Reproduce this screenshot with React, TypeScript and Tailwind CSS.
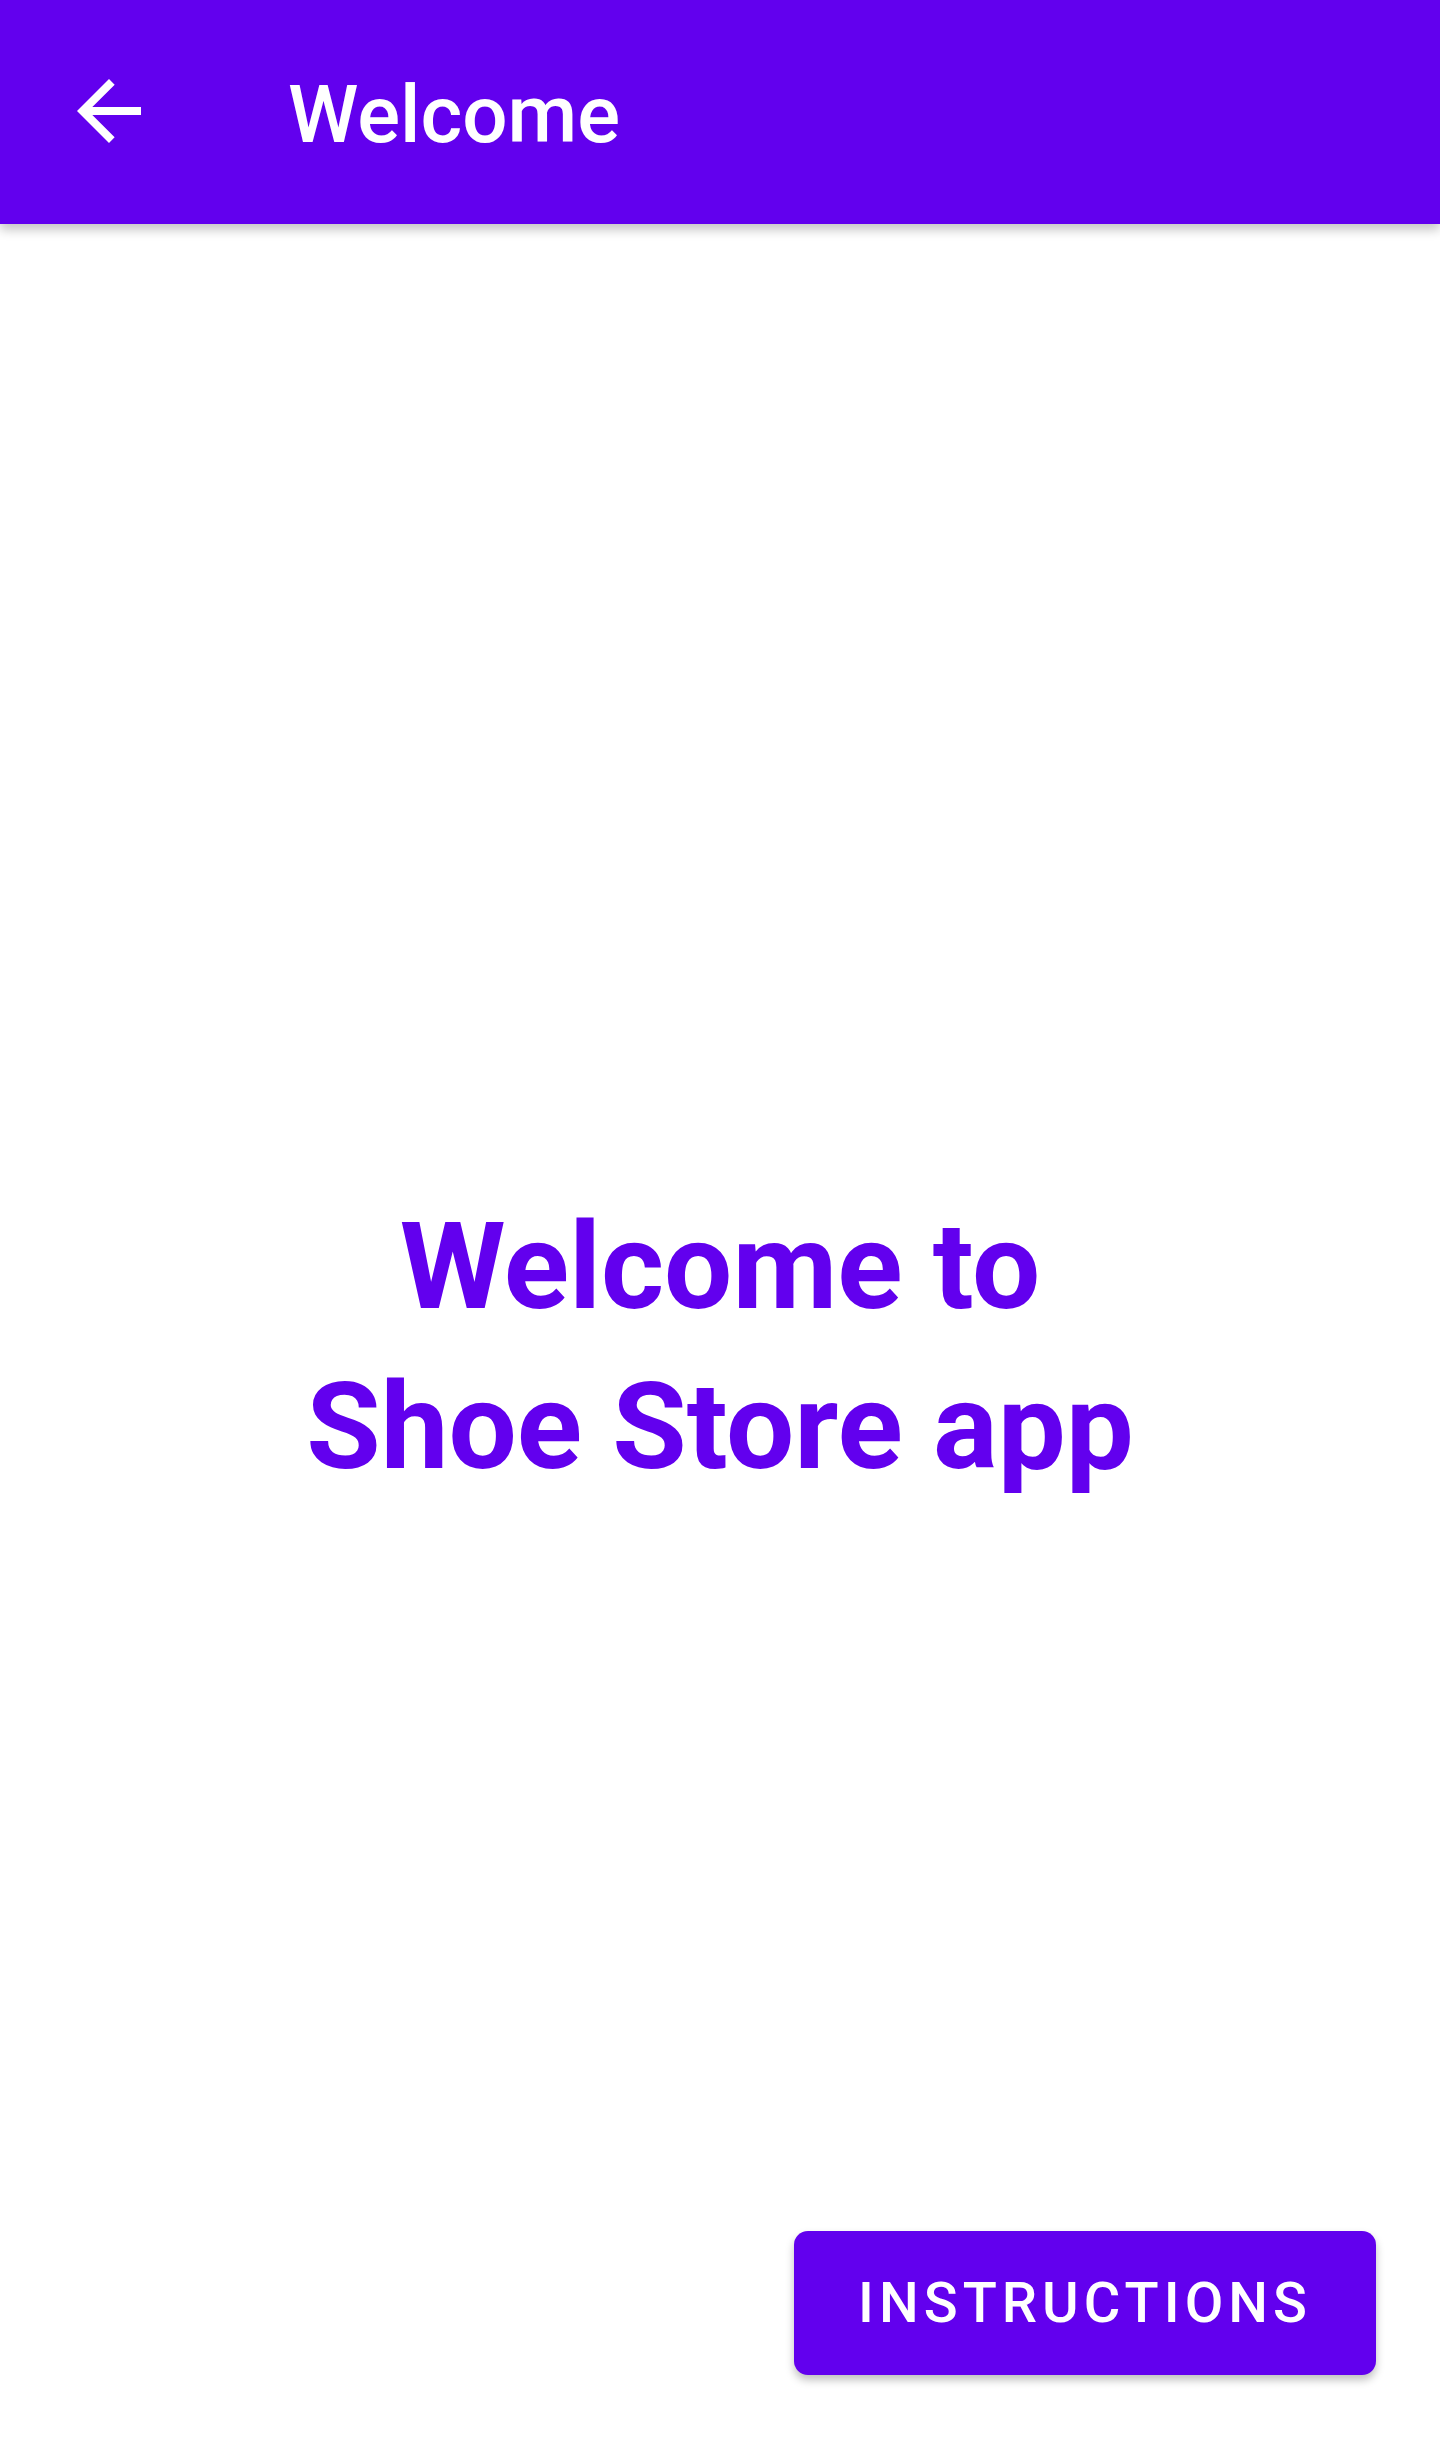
import React from "react";

export default function App() {
  return (
    <div className="flex h-[2464px] w-[1440px] flex-col bg-white" style={{ fontFamily: "Roboto, 'Noto Sans', sans-serif" }}>
      <header className="relative z-10 flex h-[224px] shrink-0 items-center bg-[#6200EE] shadow-[0_6px_10px_rgba(0,0,0,0.22)]">
        <div className="ml-[61px] mb-[3px] flex h-[96px] w-[96px] items-center justify-center">
          <svg width="96" height="96" viewBox="0 0 24 24" fill="#ffffff">
            <path d="M20 11H7.83l5.59-5.59L12 4l-8 8 8 8 1.41-1.41L7.83 13H20v-2z" />
          </svg>
        </div>
        <h1 className="ml-[131px] mt-[6px] text-[80px] font-medium leading-none text-white">Welcome</h1>
      </header>
      <main className="flex flex-1 flex-col">
        <div className="pt-[963px] text-center text-[121px] font-bold leading-[160px] text-[#6200EE]">
          Welcome to
          <br />
          Shoe Store app
        </div>
        <div className="mt-auto flex justify-end pb-[89px] pr-[64px]">
          <button className="flex h-[144px] w-[582px] items-center justify-center rounded-[14px] bg-[#6200EE] text-[56px] font-medium tracking-[0.09em] text-white shadow-[0_5px_8px_rgba(0,0,0,0.25)]">
            INSTRUCTIONS
          </button>
        </div>
      </main>
    </div>
  );
}
